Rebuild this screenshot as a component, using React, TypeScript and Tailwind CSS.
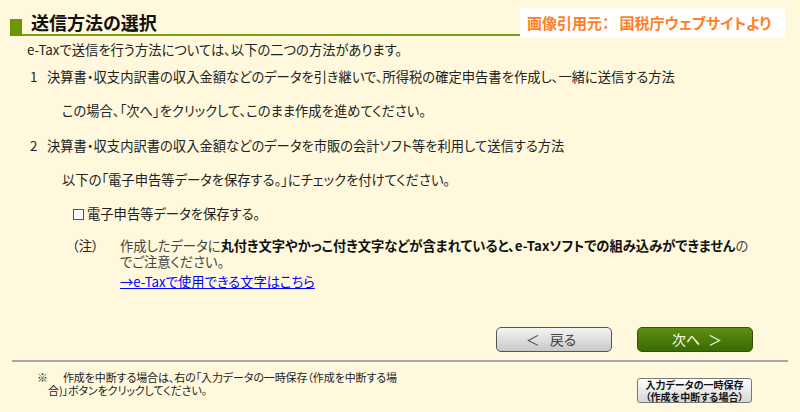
import React from 'react'

const App: React.FC = () => {
  return (
    <div className="w-[800px] h-[412px] overflow-hidden bg-[#fff8dc] text-[#222] font-['Noto_Sans_CJK_JP','Noto_Sans',sans-serif] [font-feature-settings:'palt']">
      {/* header */}
      <div className="flex items-start pt-[8px]">
        <div className="flex-1 ml-[10px] mt-[4px] h-[24px] flex items-end">
          <div className="w-[12px] h-[17px] bg-[#6f9500]" />
          <div className="flex-1 h-full border-b-2 border-[#7aa012] pl-[9px] text-[18px] font-bold leading-[20px] text-[#111]">
            送信方法の選択
          </div>
        </div>
        <div className="w-[265px] h-[29px] mr-[15px] bg-white flex items-center pl-[7px] text-[15px] font-bold text-[#ff7f27] leading-none">
          <span>画像引用元：</span>
          <span className="inline-block w-[10px]" />
          <span>国税庁ウェブサイトより</span>
        </div>
      </div>

      {/* body */}
      <div className="text-[13.3px] leading-[16px]">
        <p className="mt-[5px] ml-[27px]">e-Taxで送信を行う方法については、以下の二つの方法があります。</p>
        <p className="mt-[11px] ml-[30px] flex">
          <span className="w-[17px]">1</span>
          <span>決算書・収支内訳書の収入金額などのデータを引き継いで、所得税の確定申告書を作成し、一緒に送信する方法</span>
        </p>
        <p className="mt-[18px] ml-[62px]">この場合、「次へ」をクリックして、このまま作成を進めてください。</p>
        <p className="mt-[19px] ml-[30px] flex">
          <span className="w-[17px]">2</span>
          <span>決算書・収支内訳書の収入金額などのデータを市販の会計ソフト等を利用して送信する方法</span>
        </p>
        <p className="mt-[18px] ml-[62px]">以下の「電子申告等データを保存する。」にチェックを付けてください。</p>
        <label className="mt-[18px] ml-[73px] flex items-center gap-[3px]">
          <span className="inline-block w-[11px] h-[11px] border border-[#555] bg-white" />
          <span>電子申告等データを保存する。</span>
        </label>
        <div className="mt-[16px] ml-[72px] flex leading-[16px]">
          <span className="w-[48px] shrink-0">（注）</span>
          <div>
            <p className="text-[#444]">
              作成したデータに
              <span className="font-bold text-[#111]">丸付き文字やかっこ付き文字などが含まれていると、e-Taxソフトでの組み込みができません</span>
              の<br />
              でご注意ください。
            </p>
            <a href="#" className="block mt-[4px] text-[#0000ff] underline">→e-Taxで使用できる文字はこちら</a>
          </div>
        </div>
      </div>

      {/* buttons */}
      <div className="mt-[37px] flex justify-end gap-[25px] pr-[47px]">
        <button className="w-[116px] h-[25px] rounded-[5px] border border-[#555] bg-gradient-to-b from-[#f4f4f4] to-[#c9c9c9] text-[14px] text-[#444] flex items-center justify-center gap-[10px] pr-[6px]">
          <span>＜</span>
          <span>戻る</span>
        </button>
        <button className="w-[116px] h-[25px] rounded-[5px] border border-[#2d5400] bg-gradient-to-b from-[#5d8f12] to-[#3b6a02] text-[14px] text-white flex items-center justify-center gap-[8px] pl-[4px]">
          <span>次へ</span>
          <span>＞</span>
        </button>
      </div>

      <div className="mt-[8px] mx-[12px] border-t-2 border-[#a8a8a0]" />

      {/* footer */}
      <div className="flex items-start">
        <p className="mt-[9px] pl-[48px] -indent-[11px] text-[11px] leading-[13px] tracking-[-0.1px] flex-1">
          ※<span className="inline-block w-[15px]" />作成を中断する場合は、右の「入力データの一時保存（作成を中断する場<br />
          合)」ボタンをクリックしてください。
        </p>
        <button className="mt-[16px] mr-[48px] w-[115px] h-[25px] rounded-[3px] border border-[#777] bg-gradient-to-b from-white to-[#d6d6d6] text-[10px] font-bold leading-[11.5px] text-[#111] flex flex-col items-center justify-center">
          <span>入力データの一時保存</span>
          <span>（作成を中断する場合）</span>
        </button>
      </div>
    </div>
  )
}

export default App
